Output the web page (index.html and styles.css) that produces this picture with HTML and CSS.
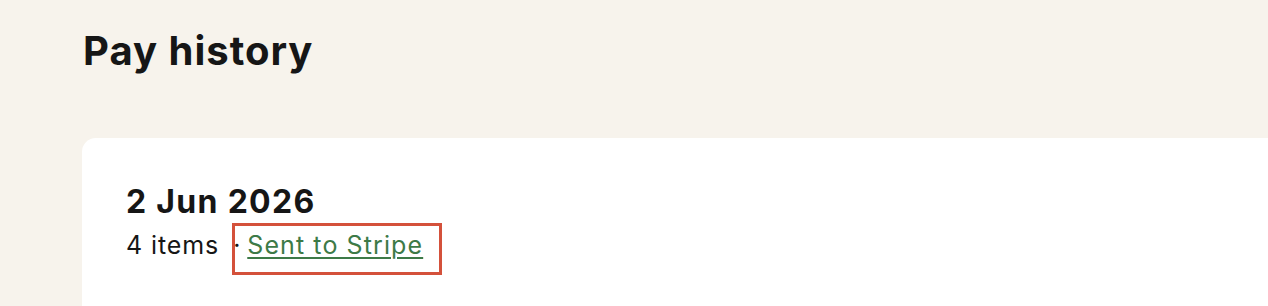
FILE: index.html
```html
<!DOCTYPE html>
<html lang="en">
<head>
    <meta charset="UTF-8">
    <title>Pay history</title>
    <link rel="stylesheet" href="styles.css">
</head>
<body>
    <div class="page">
        <h1 class="page-title">Pay history</h1>
        <div class="card">
            <div class="run">
                <h2 class="run-date">2 Jun 2026</h2>
                <div class="run-meta">
                    <span class="count">4 items</span>
                    <span class="highlight"><span class="sep">·</span><a href="#" class="status-link">Sent to Stripe</a></span>
                </div>
            </div>
        </div>
    </div>
</body>
</html>
```

FILE: styles.css
```css
body {
    margin: 0;
    background-color: #f7f3ec;
    font-family: Inter, "Liberation Sans", sans-serif;
    color: #161616;
    overflow: hidden;
}
.page {
    padding: 27px 0 0 82px;
}
.page-title {
    margin: 0 0 0 1px;
    font-size: 40px;
    font-weight: 700;
    line-height: 48px;
    letter-spacing: 1px;
}
.card {
    margin-top: 63px;
    background-color: #fff;
    border-radius: 14px 0 0 0;
    padding: 46px 44px 60px 44px;
    min-height: 200px;
}
.run-date {
    margin: 0;
    font-size: 32px;
    font-weight: 700;
    line-height: 36px;
    letter-spacing: 1.3px;
}
.run-meta {
    display: flex;
    align-items: flex-start;
    margin-top: 3px;
    font-size: 25px;
    line-height: 28px;
    letter-spacing: 0.9px;
}
.count {
    margin-top: 8px;
    margin-right: 13px;
}
.highlight {
    display: inline-flex;
    border: 3px solid #d4513b;
    padding: 5px 16px 13px 0;
}
.sep {
    margin-left: -2px;
    margin-right: 6px;
}
.status-link {
    color: #3d7a47;
    letter-spacing: 1.1px;
    text-decoration: underline;
    text-underline-offset: 3px;
    text-decoration-thickness: 2px;
}
```
